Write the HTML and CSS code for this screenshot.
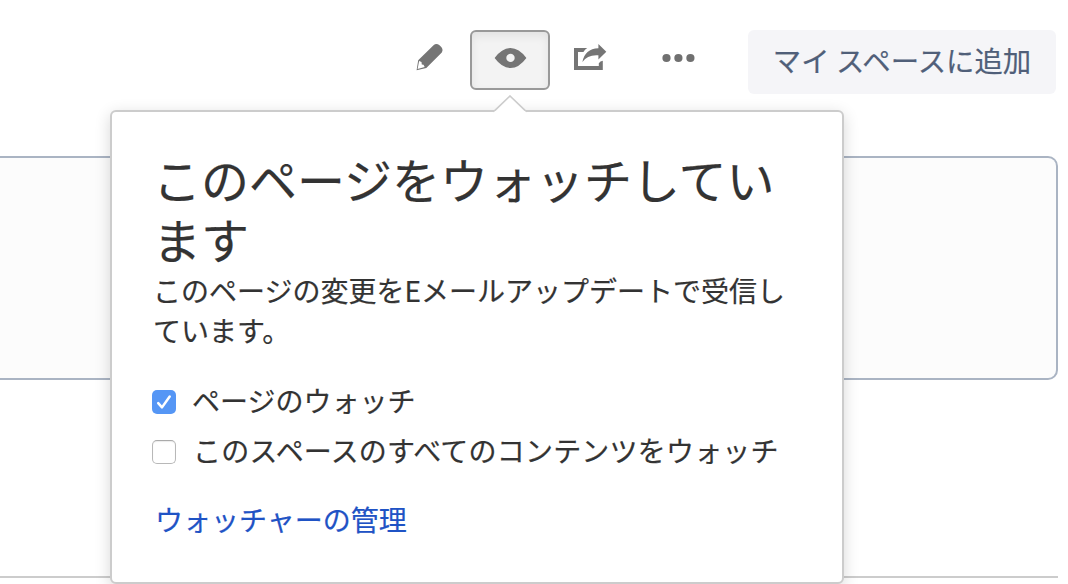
FILE: index.html
```html
<!DOCTYPE html>
<html lang="ja">
<head>
<meta charset="utf-8">
<title>ウォッチ</title>
<link rel="stylesheet" href="styles.css">
</head>
<body>
<div class="page">
  <header class="toolbar">
    <button class="tool" aria-label="編集">
      <svg class="icon" width="80" height="60" viewBox="0 0 80 60">
        <path fill="#757575" fill-rule="evenodd" d="M26.6 40.2L28.2 30.2L43.8 15.1Q46.4 12.9 49.8 15.6Q54 19.3 51.8 22.5L36.3 38ZM27.6 39L34.7 37.1L33.5 34.8L31.8 34.4L31.5 32.1L29.1 31Z"/>
      </svg>
    </button>
    <button class="tool tool-active" aria-label="ウォッチ">
      <svg class="icon" width="80" height="60" viewBox="0 0 80 60">
        <path fill="#757575" fill-rule="evenodd" d="M24.6 28Q32 18 40.5 18Q49 18 56.4 28Q49 38 40.5 38Q32 38 24.6 28ZM40.5 23.7A4.2 4.2 0 1 0 40.5 32.1A4.2 4.2 0 1 0 40.5 23.7Z"/>
      </svg>
    </button>
    <button class="tool" aria-label="共有">
      <svg class="icon" width="80" height="60" viewBox="0 0 80 60">
        <path fill="#757575" d="M24 18H37.2Q34.8 19.4 33.4 22H28V36H48.8V33.2Q50.2 31.3 52.8 30.8V40H24Z"/>
        <path fill="#757575" d="M48.4 14L56.3 21.7L48.4 29.5V25.3Q37.6 24.4 32.4 32Q34.8 19 48.4 18.3Z"/>
      </svg>
    </button>
    <button class="tool tool-more" aria-label="その他">
      <svg class="icon" width="80" height="60" viewBox="0 0 80 60">
        <g fill="#707070"><circle cx="28.5" cy="28" r="4.1"/><circle cx="40.4" cy="28" r="4.1"/><circle cx="52.4" cy="28" r="4.1"/></g>
      </svg>
    </button>
    <button class="add-space">マイ スペースに追加</button>
  </header>
  <section class="panel"></section>
  <hr class="rule">
  <div class="popup">
    <svg class="arrow" width="34" height="18" viewBox="0 0 34 18"><path d="M0 18V16.5L1 16L17 1L33 16L34 16.5V18Z" fill="#fff"/><path d="M0 16.5Q1 16.5 2 15.3L17 1L32 15.3Q33 16.5 34 16.5" fill="none" stroke="#ccc" stroke-width="1.6"/></svg>
    <h2 class="title">このページをウォッチしてい<br>ます</h2>
    <p class="description">このページの変更をEメールアップデートで受信し<br>ています。</p>
    <div class="options">
      <label class="option">
        <span class="box box-checked"><svg class="check" width="24" height="24" viewBox="0 0 24 24"><path d="M6.2 13.2L10 17.4L17.7 6.5" fill="none" stroke="#fff" stroke-width="2.5" stroke-linecap="round" stroke-linejoin="round"/></svg></span>
        <span class="option-text">ページのウォッチ</span>
      </label>
      <label class="option">
        <span class="box"></span>
        <span class="option-text option-text-wide">このスペースのすべてのコンテンツをウォッチ</span>
      </label>
    </div>
    <a class="manage">ウォッチャーの管理</a>
  </div>
</div>
</body>
</html>
```
FILE: styles.css
```css
* { box-sizing: border-box; }
body {
  margin: 0;
  background: #fff;
  color: #333;
  font: 28px/40px "Noto Sans CJK JP", sans-serif;
  -webkit-text-stroke: .2px currentColor;
}
.page {
  position: relative;
  width: 1068px;
  height: 584px;
  overflow: hidden;
}
.toolbar {
  display: flex;
  justify-content: flex-end;
  align-items: flex-start;
  height: 156px;
  padding: 30px 12px 0 0;
}
button {
  border: 0;
  margin: 0;
  padding: 0;
  background: none;
  font: inherit;
}
.tool { width: 80px; height: 60px; flex: none; }
.tool-active {
  border: 2px solid #999;
  border-radius: 6px;
  background: #f3f3f3;
  box-shadow: inset 0 4px 10px rgba(0, 0, 0, .07);
}
.icon { display: block; }
.tool-active .icon { margin: -2px; }
.tool-more { margin: 0 30px 0 8px; }
.add-space {
  width: 308px;
  height: 64px;
  padding-bottom: 4px;
  border-radius: 6px;
  background: #f5f5f8;
  color: #505f79;
  font-size: 28.4px;
  white-space: nowrap;
}
.panel {
  width: 1058px;
  height: 224px;
  border: 2px solid #aab4c3;
  border-left: 0;
  border-radius: 0 10px 10px 0;
  background: #fcfcfc;
}
.rule {
  width: 1058px;
  height: 2px;
  margin: 196px 0 0;
  border: 0;
  background: #ccc;
}
.popup {
  position: absolute;
  left: 110px;
  top: 110px;
  width: 734px;
  height: 474px;
  padding: 36px 40px 40px;
  border: 2px solid #ccc;
  border-radius: 6px;
  background: #fff;
  box-shadow: 0 4px 16px rgba(0, 0, 0, .16);
  white-space: nowrap;
}
.arrow {
  position: absolute;
  left: 381px;
  top: -17px;
}
.title {
  margin: 0 0 2px 1px;
  font-size: 48px;
  font-weight: 400;
  line-height: 60px;
}
.description { margin: 0 0 0 1px; }
.options { margin-top: 32px; }
.option {
  display: flex;
  align-items: center;
  height: 40px;
}
.option + .option { margin-top: 10px; }
.box {
  width: 24px;
  height: 24px;
  border: 1px solid #b8b8b8;
  border-top-color: #aaa;
  border-radius: 5px;
  background: #fff;
  box-shadow: inset 0 1px 1px rgba(0, 0, 0, .08);
}
.box-checked {
  border: 0;
  background: #5596f5;
  box-shadow: none;
}
.check { display: block; }
.option-text {
  margin-left: 16px;
  padding-bottom: 5px;
}
.option-text-wide {
  margin-left: 17px;
  letter-spacing: .2px;
}
.manage {
  display: block;
  margin: 27px 0 0 3px;
  color: #1f53c5;
}
```
